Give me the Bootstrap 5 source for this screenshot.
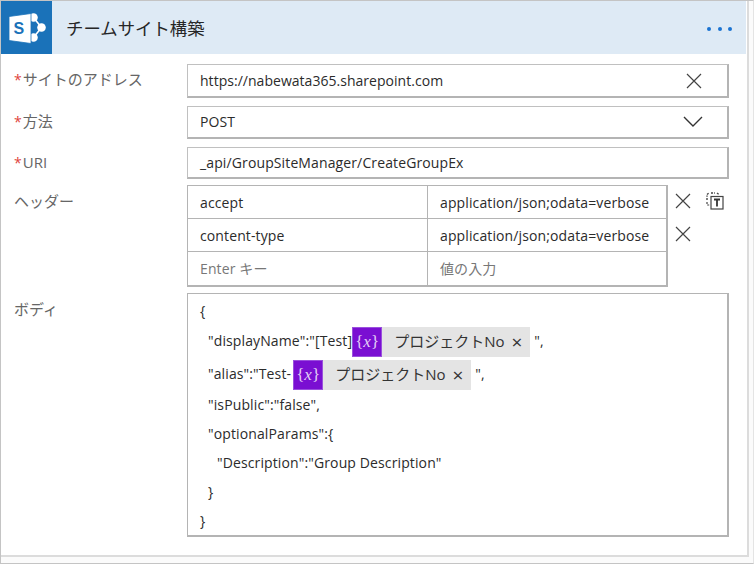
<!DOCTYPE html>
<html lang="ja">
<head>
  <meta charset="UTF-8">
  <title>チームサイト構築</title>
  <link rel="stylesheet" href="https://cdn.jsdelivr.net/npm/bootstrap@5.3.0/dist/css/bootstrap.min.css">
  <style>
    html, body { height: 564px; overflow: hidden; }
    body { background: #fff; font-family: "Open Sans", "Noto Sans CJK JP", sans-serif; font-size: 14px; letter-spacing: .12px; color: #2b2b2b; }
    .page { height: 564px; width: 754px; background: #fbfbfb; border: 1px solid #c4c4c4; border-right-color: #e4e4e4; }
    .action { width: 748px; height: 556px; background: #fff; border-bottom: 2px solid #dcdcdc; border-right: 2px solid #dcdcdc; }
    .action-head { height: 53px; background: #deeaf5; margin-right: 1px; }
    .logo { width: 51px; height: 53px; background: #1a72b9; }
    .action-title { font-size: 17.4px; letter-spacing: 0; margin-left: 14px; padding-top: 1px; color: #262626; }
    .dots { margin-right: 14px; gap: 6.5px; padding-top: 2px; }
    .dots i { width: 4px; height: 4px; border-radius: 50%; background: #1a73d1; }
    .action-body { padding: 10px 18px 0 13px; }
    .fld-label { width: 173px; flex: none; color: #666; font-size: 15px; letter-spacing: 0; }
    .fld-label b { color: #e0433c; font-weight: 400; font-size: 14px; margin-right: 1px; }
    .fld { flex: 1; border-style: solid; border-width: 1px 2px 2px 1px; border-color: #c0c0c0 #b4b4b4 #b4b4b4 #c0c0c0; padding: 0 12px; display: flex; align-items: center; justify-content: space-between; background: #fff; }
    .fld-url { letter-spacing: .03px; }
    .h-34 { height: 34px; margin-bottom: 8px; }
    .h-33 { height: 33px; margin-bottom: 8px; padding-bottom: 1px; }
    .h-32 { height: 32px; margin-bottom: 6px; }
    .x-btn { margin-right: 13px; }
    .chev { margin-right: 12px; }
    .label-line { line-height: 30px; }
    .label-low { line-height: 32px; }
    .hdr-wrap { flex: 1; gap: 7px; margin-bottom: 6px; }
    .hdr { width: 481px; flex: none; border: 1px solid #b4b4b4; border-width: 1px 2px 2px 1px; }
    .hdr-row { height: 33px; display: flex; align-items: center; border-bottom: 1px solid #b4b4b4; }
    .hdr-row:last-child { border-bottom: 0; }
    .hdr-row div { padding-left: 12px; height: 100%; display: flex; align-items: center; }
    .hdr-row div:first-child { width: 240px; border-right: 1px solid #b4b4b4; }
    .muted { color: #777; }
    .tools { width: 54px; margin-top: -1px; }
    .tool-row { height: 33px; gap: 15px; }
    .body-box { flex: 1; height: 244px; border: 1px solid #b4b4b4; border-width: 1px 2px 2px 1px; padding: 2px 12px 0; }
    .ln { height: 29px; display: flex; align-items: center; white-space: pre; }
    .ln-first { height: 28px; }
    .ln-t { height: 33px; }
    .ln-2 { padding-left: 17px; }
    .ln-d { padding-left: 8px; }
    .token { display: inline-flex; align-items: stretch; height: 30px; margin-top: 2px; background: #e4e4e4; }
    .token-b { margin-left: 2px; }
    .token-ic { width: 30px; background: #7a0fd2; color: #e4d0f6; font-family: "Liberation Serif", serif; font-size: 17px; letter-spacing: 0; display: flex; align-items: center; justify-content: center; border: 1px solid #9a50dd; }
    .token-tx { padding: 0 8px 0 12px; display: flex; align-items: center; gap: 7px; color: #333; font-size: 15px; letter-spacing: 0; }
    .token-x { font-size: 19px; line-height: 1; padding-top: 2px; }
    .quote { margin-left: 4px; }
  </style>
</head>
<body>
<div class="page">
  <div class="action">
    <div class="action-head d-flex align-items-center">
      <div class="logo d-flex align-items-center justify-content-center">
        <svg width="38" height="36" viewBox="0 0 38 36">
          <path d="M25.5 7.5 33.5 17.5 25.5 27.5" fill="none" stroke="#fff" stroke-width="1.6"/>
          <circle cx="25.5" cy="7.5" r="4.3" fill="#fff"/>
          <circle cx="33.5" cy="17.5" r="4.3" fill="#fff"/>
          <circle cx="25.5" cy="27.5" r="4.3" fill="#fff"/>
          <path d="M1 6.5 23 3.5V33.5L1 30.5Z" fill="#fff" stroke="#1a72b9" stroke-width=".8"/>
          <text x="11" y="24" text-anchor="middle" font-family="Liberation Sans, sans-serif" font-weight="700" font-size="16" fill="#1a72b9">S</text>
        </svg>
      </div>
      <div class="action-title flex-grow-1">チームサイト構築</div>
      <div class="dots d-flex"><i></i><i></i><i></i></div>
    </div>
    <div class="action-body">
      <div class="d-flex">
        <div class="fld-label label-line"><b>*</b>サイトのアドレス</div>
        <div class="fld h-34"><span class="fld-url">https://nabewata365.sharepoint.com</span>
          <svg class="x-btn" width="16" height="16" viewBox="0 0 16 16"><path d="M1 1 15 15M15 1 1 15" stroke="#444" stroke-width="1.2" fill="none"/></svg>
        </div>
      </div>
      <div class="d-flex">
        <div class="fld-label label-line"><b>*</b>方法</div>
        <div class="fld h-33"><span>POST</span>
          <svg class="chev" width="20" height="11" viewBox="0 0 20 11"><path d="M1 1 10 10 19 1" stroke="#333" stroke-width="1.4" fill="none"/></svg>
        </div>
      </div>
      <div class="d-flex">
        <div class="fld-label label-line"><b>*</b>URI</div>
        <div class="fld h-32"><span>_api/GroupSiteManager/CreateGroupEx</span></div>
      </div>
      <div class="d-flex">
        <div class="fld-label label-low">ヘッダー</div>
        <div class="hdr-wrap d-flex">
          <div class="hdr">
            <div class="hdr-row"><div>accept</div><div>application/json;odata=verbose</div></div>
            <div class="hdr-row"><div>content-type</div><div>application/json;odata=verbose</div></div>
            <div class="hdr-row muted"><div>Enter キー</div><div>値の入力</div></div>
          </div>
          <div class="tools">
            <div class="tool-row d-flex align-items-center">
              <svg width="16" height="16" viewBox="0 0 16 16"><path d="M1 1 15 15M15 1 1 15" stroke="#444" stroke-width="1.2" fill="none"/></svg>
              <svg width="18" height="18" viewBox="0 0 18 18"><path d="M1 8V3.5M1 2.5 3 1M5 1H9M11 1 13 2.5" stroke="#444" stroke-width="1.4" stroke-dasharray="2 1.2" fill="none"/><path d="M1 10V13H4" stroke="#444" stroke-width="1.2" stroke-dasharray="2 1.2" fill="none"/><rect x="5" y="4.5" width="12" height="12.5" fill="#fff" stroke="#444" stroke-width="1.2"/><path d="M8 7.5H14M11 7.5V14.5" stroke="#333" stroke-width="1.8" fill="none"/></svg>
            </div>
            <div class="tool-row d-flex align-items-center">
              <svg width="16" height="16" viewBox="0 0 16 16"><path d="M1 1 15 15M15 1 1 15" stroke="#444" stroke-width="1.2" fill="none"/></svg>
            </div>
          </div>
        </div>
      </div>
      <div class="d-flex">
        <div class="fld-label label-low">ボディ</div>
        <div class="body-box">
          <div class="ln ln-first">{</div>
          <div class="ln ln-t ln-d">"displayName":"[Test]<span class="token"><span class="token-ic">{<i>x</i>}</span><span class="token-tx">プロジェクトNo<span class="token-x">×</span></span></span><span class="quote">",</span></div>
          <div class="ln ln-t ln-d">"alias":"Test-<span class="token token-b"><span class="token-ic">{<i>x</i>}</span><span class="token-tx">プロジェクトNo<span class="token-x">×</span></span></span><span class="quote">",</span></div>
          <div class="ln ln-d">"isPublic":"false",</div>
          <div class="ln ln-d">"optionalParams":{</div>
          <div class="ln ln-2">"Description":"Group Description"</div>
          <div class="ln ln-d">}</div>
          <div class="ln">}</div>
        </div>
      </div>
    </div>
  </div>
</div>
</body>
</html>
